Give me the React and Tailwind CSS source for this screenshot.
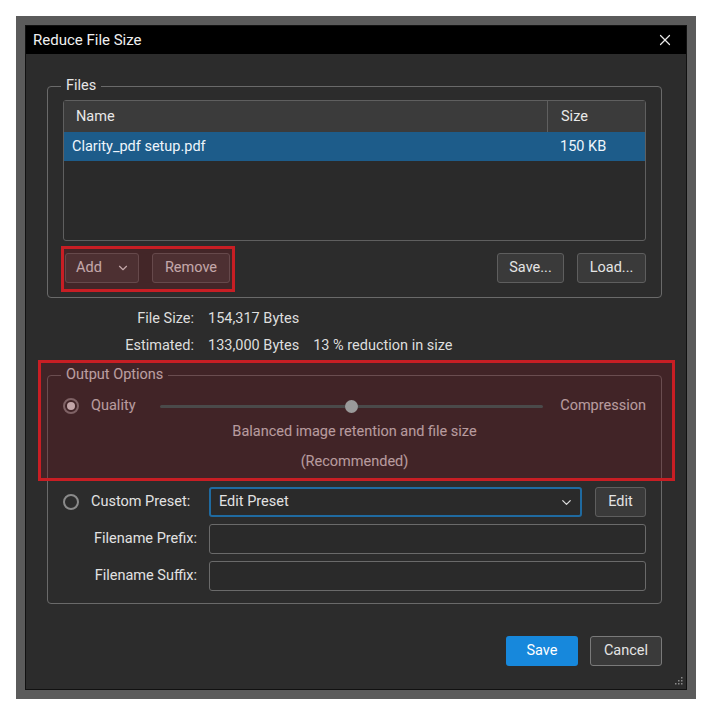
import { ChevronDown, X } from 'lucide-react';

const font = { fontFamily: 'Roboto, "Liberation Sans", sans-serif' };

function Btn({ children, className = '' }) {
  return (
    <button className={`h-[30px] rounded-[3px] border border-[#5e5e5e] bg-[#3a3a3a] text-[14.5px] text-[#e4e4e4] ${className}`}>
      {children}
    </button>
  );
}

function Radio({ checked }) {
  return (
    <span className="flex h-[16px] w-[16px] items-center justify-center rounded-full border-2 border-[#8a8a8a]">
      {checked && <span className="h-[8px] w-[8px] rounded-full bg-[#f2f2f2]" />}
    </span>
  );
}

export default function App() {
  return (
    <div className="h-[711px] w-[720px] bg-white pl-[16px] pt-[16px]" style={font}>
      <div className="h-[683px] w-[680px] border-[9px] border-[#5b5b5b] bg-[#5b5b5b]">
        <div className="flex h-full flex-col border border-[#111] bg-[#2c2c2c]">
          {/* title bar */}
          <div className="flex h-[28px] items-center justify-between bg-black pl-[7px] pr-[12px]">
            <span className="text-[15px] text-[#f0f0f0]">Reduce File Size</span>
            <X size={18} strokeWidth={1.6} className="text-[#e8e8e8]" />
          </div>

          <div className="flex flex-1 flex-col pl-[21px] pr-[24px] pt-[22px]">
            {/* Files group */}
            <fieldset className="rounded-[4px] border border-[#6a6a6a] px-[15px] pb-[14px] pt-[4px]">
              <legend className="ml-[-2px] px-[5px] text-[14.5px] leading-[20px] text-[#e6e6e6]">Files</legend>
              <div className="flex h-[141px] flex-col rounded-[3px] border border-[#5f5f5f] bg-[#2a2a2a]">
                <div className="flex h-[31px] items-center bg-[#3b3b3b] text-[14.5px] text-[#e8e8e8]">
                  <span className="flex-1 pl-[12px]">Name</span>
                  <span className="h-full w-[98px] border-l border-[#5f5f5f] pl-[13px] leading-[31px]">Size</span>
                </div>
                <div className="flex h-[29px] items-center bg-[#1d5c8a] text-[14.5px] text-[#eef5fb]">
                  <span className="flex-1 pl-[8px]">Clarity_pdf setup.pdf</span>
                  <span className="w-[98px] pl-[13px]">150 KB</span>
                </div>
              </div>
              <div className="mt-[12px] flex items-center">
                <div className="relative ml-[2px] flex gap-[13px]">
                  <span className="pointer-events-none absolute -bottom-[9px] -left-[4px] -right-[5px] -top-[7px] border-[3px] border-[#c81e24] bg-[#7a1a22]/30" />
                  <Btn className="flex w-[74px] items-center justify-between pl-[10px] pr-[8px]">
                    Add <ChevronDown size={14} strokeWidth={2} />
                  </Btn>
                  <Btn className="w-[78px]">Remove</Btn>
                </div>
                <div className="ml-auto flex gap-[13px]">
                  <Btn className="w-[67px]">Save...</Btn>
                  <Btn className="w-[69px]">Load...</Btn>
                </div>
              </div>
            </fieldset>

            {/* size info */}
            <div className="mt-[11px] grid grid-cols-[147px_1fr] gap-x-[14px] gap-y-[7px] text-[14.5px] leading-[20px] text-[#dedede]">
              <span className="text-right">File Size:</span>
              <span>154,317 Bytes</span>
              <span className="text-right">Estimated:</span>
              <span>133,000 Bytes<span className="ml-[14px]">13 % reduction in size</span></span>
            </div>

            {/* Output options */}
            <div className="relative mt-[9px]">
              <span className="pointer-events-none absolute left-[-9px] right-[-13px] top-[-5px] h-[121px] border-[3px] border-[#c81e24] bg-[#6b1820]/35" />
              <fieldset className="rounded-[4px] border border-[#6a6a6a] px-[15px] pb-[12px] pt-[9px]">
                <legend className="ml-[-2px] px-[5px] text-[14.5px] leading-[20px] text-[#e6e6e6]">Output Options</legend>
                <div className="flex h-[24px] items-center text-[14.5px] text-[#e2e2e2]">
                  <Radio checked />
                  <span className="ml-[12px] w-[69px]">Quality</span>
                  <div className="relative flex h-[12px] flex-1 items-center">
                    <div className="h-[3px] w-full rounded bg-[#4a4a4a]" />
                    <span className="absolute left-[185px] h-[13px] w-[13px] rounded-full bg-[#9a9a9a]" />
                  </div>
                  <span className="ml-[17px]">Compression</span>
                </div>
                <p className="mt-[4px] text-center text-[14.5px] leading-[20px] text-[#e2e2e2]">Balanced image retention and file size</p>
                <p className="mt-[10px] text-center text-[14.5px] leading-[20px] text-[#e2e2e2]">(Recommended)</p>

                <div className="mt-[15px] grid grid-cols-[146px_1fr] items-center gap-x-[0px] gap-y-[7px] text-[14.5px] text-[#e2e2e2]">
                  <div className="flex items-center">
                    <Radio />
                    <span className="ml-[12px]">Custom Preset:</span>
                  </div>
                  <div className="flex gap-[13px]">
                    <div className="flex h-[30px] flex-1 items-center justify-between rounded-[3px] border-2 border-[#1f6aa0] bg-[#2a2a2a] pl-[8px] pr-[6px]">
                      <span>Edit Preset</span>
                      <ChevronDown size={15} strokeWidth={2} className="text-[#dcdcdc]" />
                    </div>
                    <Btn className="w-[51px]">Edit</Btn>
                  </div>
                  <span className="pr-[12px] text-right">Filename Prefix:</span>
                  <div className="h-[30px] rounded-[3px] border border-[#6a6a6a] bg-[#2a2a2a]" />
                  <span className="pr-[12px] text-right">Filename Suffix:</span>
                  <div className="h-[30px] rounded-[3px] border border-[#6a6a6a] bg-[#2a2a2a]" />
                </div>
              </fieldset>
            </div>

            {/* footer */}
            <div className="mt-auto flex items-center justify-end gap-[12px] pb-[20px]">
              <button className="h-[30px] w-[72px] rounded-[3px] bg-[#1788dc] text-[14.5px] text-white">Save</button>
              <Btn className="w-[72px] border-[#7a7a7a] bg-[#2e2e2e]">Cancel</Btn>
            </div>
          </div>
          <div className="flex justify-end pb-[3px] pr-[3px]">
            <svg width="8" height="8" viewBox="0 0 8 8" className="-mt-[9px]">
              <g fill="#8a8a8a">
                <rect x="6" y="0" width="1.5" height="1.5" />
                <rect x="3" y="3" width="1.5" height="1.5" />
                <rect x="6" y="3" width="1.5" height="1.5" />
                <rect x="0" y="6" width="1.5" height="1.5" />
                <rect x="3" y="6" width="1.5" height="1.5" />
                <rect x="6" y="6" width="1.5" height="1.5" />
              </g>
            </svg>
          </div>
        </div>
      </div>
    </div>
  );
}
